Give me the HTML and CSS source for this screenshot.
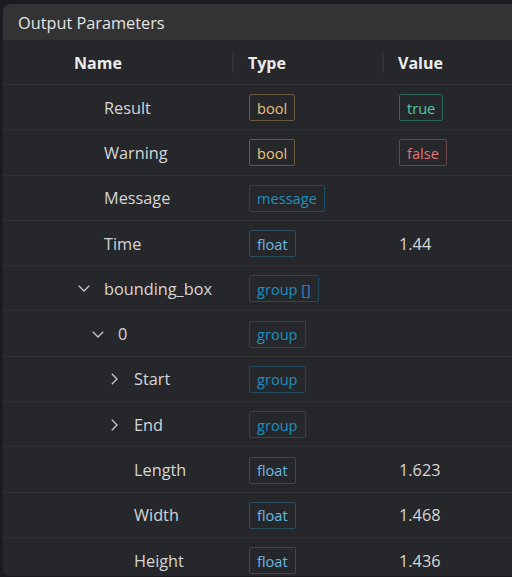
FILE: index.html
```html
<!DOCTYPE html>
<html>
<head>
<meta charset="utf-8">
<link rel="stylesheet" href="styles.css">
</head>
<body>
<div class="panel">
  <div class="title">Output Parameters</div>
  <div class="table">
    <div class="row head">
      <div class="cell name-h">Name</div>
      <div class="cell col-h">Type</div>
      <div class="cell col-h">Value</div>
    </div>
    <div class="row">
      <div class="cell name"><span class="chev"></span><span>Result</span></div>
      <div class="cell type"><span class="badge b-bool">bool</span></div>
      <div class="cell value"><span class="badge b-true">true</span></div>
    </div>
    <div class="row">
      <div class="cell name"><span class="chev"></span><span>Warning</span></div>
      <div class="cell type"><span class="badge b-bool">bool</span></div>
      <div class="cell value"><span class="badge b-false">false</span></div>
    </div>
    <div class="row">
      <div class="cell name"><span class="chev"></span><span>Message</span></div>
      <div class="cell type"><span class="badge b-group">message</span></div>
      <div class="cell value"></div>
    </div>
    <div class="row">
      <div class="cell name"><span class="chev"></span><span>Time</span></div>
      <div class="cell type"><span class="badge b-float">float</span></div>
      <div class="cell value">1.44</div>
    </div>
    <div class="row">
      <div class="cell name"><span class="chev"><svg width="12" height="7" viewBox="0 0 12 7"><path d="M0.8 0.8 L6 6 L11.2 0.8" fill="none" stroke="#c8c8c8" stroke-width="1.3"/></svg></span><span>bounding_box</span></div>
      <div class="cell type"><span class="badge b-group">group []</span></div>
      <div class="cell value"></div>
    </div>
    <div class="row">
      <div class="cell name lvl1"><span class="chev"><svg width="12" height="7" viewBox="0 0 12 7"><path d="M0.8 0.8 L6 6 L11.2 0.8" fill="none" stroke="#c8c8c8" stroke-width="1.3"/></svg></span><span>0</span></div>
      <div class="cell type"><span class="badge b-group">group</span></div>
      <div class="cell value"></div>
    </div>
    <div class="row">
      <div class="cell name lvl2"><span class="chev"><svg width="7" height="12" viewBox="0 0 7 12"><path d="M0.8 0.8 L6 6 L0.8 11.2" fill="none" stroke="#c8c8c8" stroke-width="1.3"/></svg></span><span>Start</span></div>
      <div class="cell type"><span class="badge b-group">group</span></div>
      <div class="cell value"></div>
    </div>
    <div class="row">
      <div class="cell name lvl2"><span class="chev"><svg width="7" height="12" viewBox="0 0 7 12"><path d="M0.8 0.8 L6 6 L0.8 11.2" fill="none" stroke="#c8c8c8" stroke-width="1.3"/></svg></span><span>End</span></div>
      <div class="cell type"><span class="badge b-group">group</span></div>
      <div class="cell value"></div>
    </div>
    <div class="row">
      <div class="cell name lvl2"><span class="chev"></span><span>Length</span></div>
      <div class="cell type"><span class="badge b-float">float</span></div>
      <div class="cell value">1.623</div>
    </div>
    <div class="row">
      <div class="cell name lvl2"><span class="chev"></span><span>Width</span></div>
      <div class="cell type"><span class="badge b-float">float</span></div>
      <div class="cell value">1.468</div>
    </div>
    <div class="row">
      <div class="cell name lvl2"><span class="chev"></span><span>Height</span></div>
      <div class="cell type"><span class="badge b-float">float</span></div>
      <div class="cell value">1.436</div>
    </div>
  </div>
</div>
</body>
</html>
```

FILE: styles.css
```css
html, body {
  margin: 0;
  padding: 0;
  background: #1b1b1f;
  overflow: hidden;
}
body {
  font-family: "Open Sans", "Noto Sans", sans-serif;
  color: #d6d6d6;
  width: 512px;
  height: 577px;
}
.panel {
  margin: 4px 0 0 2px;
  width: 530px;
  height: 572px;
  background: #26272b;
  border-radius: 8px;
  overflow: hidden;
  border-left: 1px solid #202024;
  box-sizing: border-box;
}
.title {
  height: 36px;
  background: #333333;
  display: flex;
  align-items: center;
  padding-left: 15px;
  padding-top: 2px;
  box-sizing: border-box;
  font-size: 16.3px;
  color: #e4e4e4;
}
.table {
  display: flex;
  flex-direction: column;
}
.row {
  display: grid;
  grid-template-columns: 229px 150px 1fr;
  height: 45.3px;
  border-bottom: 1px solid #2f3034;
  box-sizing: border-box;
  align-items: center;
  font-size: 16.3px;
}
.row.head {
  height: 45px;
  font-weight: 700;
  color: #ececec;
  font-size: 16px;
}
.cell {
  display: flex;
  align-items: center;
  height: 100%;
  padding-top: 1px;
  box-sizing: border-box;
}
.name-h {
  padding-left: 71px;
}
.col-h {
  position: relative;
  padding-left: 16px;
}
.col-h::before {
  content: "";
  position: absolute;
  left: 0;
  top: 12px;
  width: 2px;
  height: 21px;
  background: #303136;
}
.name {
  padding-left: 71px;
}
.name.lvl1 { padding-left: 85px; }
.name.lvl2 { padding-left: 101px; }
.chev {
  width: 20px;
  margin-right: 10px;
  display: flex;
  justify-content: center;
  align-items: center;
}
.type, .value {
  padding-left: 17px;
}
.value {
  color: #d6d6d6;
}
.badge {
  display: inline-flex;
  align-items: center;
  height: 27px;
  box-sizing: border-box;
  padding: 0 7px;
  border: 1px solid;
  border-radius: 2px;
  font-size: 14.6px;
}
.b-bool { color: #e8c27c; border-color: #6a5a3c; }
.b-true { color: #4fc9a2; border-color: #2c6656; }
.b-false { color: #e07476; border-color: #6a4346; }
.b-group { color: #1d8fc0; border-color: #1f4b61; }
.b-float { color: #6cb7e0; border-color: #2d4d60; }
```
